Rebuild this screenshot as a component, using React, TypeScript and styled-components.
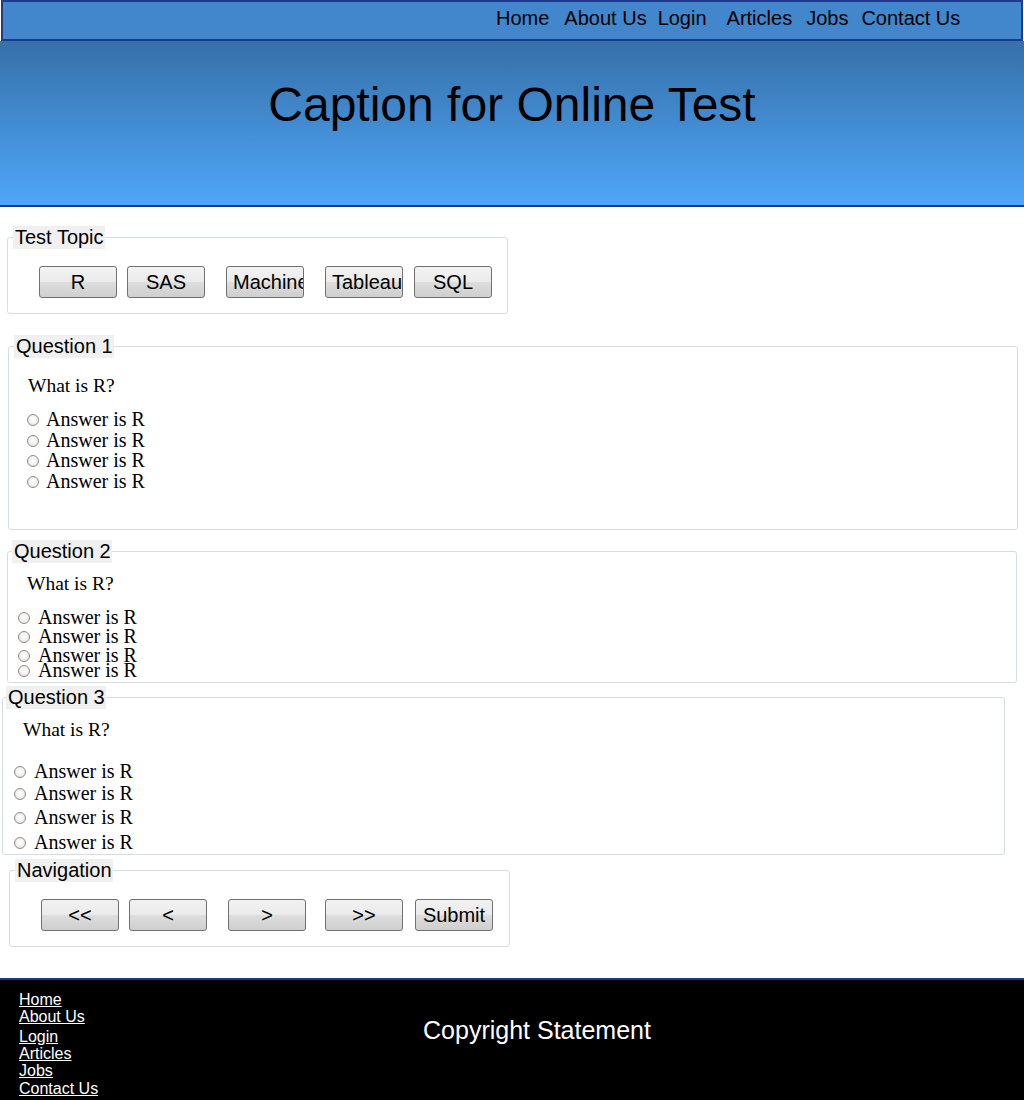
import React from "react";
import styled, { createGlobalStyle } from "styled-components";

const GlobalStyle = createGlobalStyle`
  html, body {
    margin: 0;
    padding: 0;
    background: #ffffff;
  }
  body {
    font-family: "Liberation Sans", Arial, sans-serif;
    color: #000;
  }
`;

const Page = styled.div`
  display: flex;
  flex-direction: column;
`;

const NavBar = styled.nav`
  box-sizing: border-box;
  margin: 0 1px;
  height: 41px;
  border: 2px solid #1d3a8f;
  background: #4287cc;
  display: flex;
  align-items: flex-start;
  padding: 5px 0 0 493px;
  font-size: 20px;
  line-height: 23px;
`;

const NavLink = styled.a<{ $ml: number }>`
  margin-left: ${(p) => p.$ml}px;
  color: #000;
  text-decoration: none;
  white-space: nowrap;
`;

const Banner = styled.header`
  box-sizing: border-box;
  height: 166px;
  padding-top: 36px;
  border-bottom: 2px solid #1d3a8f;
  background: linear-gradient(#3670a8, #4fa6f9);
`;

const Title = styled.h1`
  margin: 0;
  font-size: 48px;
  font-weight: normal;
  line-height: 55px;
  text-align: center;
  color: #000;
`;

const Main = styled.main`
  display: flex;
  flex-direction: column;
  align-items: flex-start;
`;

const Group = styled.fieldset<{ $top: number; $left: number; $width: number; $pb: number }>`
  box-sizing: border-box;
  margin: ${(p) => p.$top}px 0 0 ${(p) => p.$left}px;
  width: ${(p) => p.$width}px;
  min-width: 0;
  padding: 0 0 ${(p) => p.$pb}px 0;
  border: 1px solid #d3dde5;
  border-radius: 3px;
  background: #fff;
`;

const Legend = styled.legend<{ $ml: number }>`
  margin-left: ${(p) => p.$ml}px;
  padding: 0 1px 0 2px;
  background: #f0f0f0;
  font-family: "Liberation Sans", Arial, sans-serif;
  font-size: 20px;
  line-height: 23px;
  color: #000;
`;

const ButtonRow = styled.div<{ $pl: number }>`
  display: flex;
  padding: 17px 0 0 ${(p) => p.$pl}px;
`;

const Btn = styled.button<{ $ml: number }>`
  box-sizing: border-box;
  flex: none;
  display: flex;
  align-items: center;
  justify-content: safe center;
  width: 78px;
  height: 32px;
  margin: 0 0 0 ${(p) => p.$ml}px;
  padding: 0 6px;
  border: 1px solid #707070;
  border-radius: 3px;
  background: linear-gradient(#f2f2f2 0%, #ebebeb 48%, #dddddd 52%, #cfcfcf 100%);
  font-family: "Liberation Sans", Arial, sans-serif;
  font-size: 20px;
  line-height: 23px;
  color: #000;
  white-space: nowrap;
  overflow: hidden;
  cursor: pointer;
`;

const QuestionText = styled.p<{ $mt: number; $pl: number }>`
  margin: ${(p) => p.$mt}px 0 0 0;
  padding-left: ${(p) => p.$pl}px;
  font-family: "Liberation Serif", "Times New Roman", serif;
  font-size: 19.5px;
  line-height: 23px;
`;

const AnswerList = styled.div<{ $mt: number; $pl: number }>`
  display: flex;
  flex-direction: column;
  margin-top: ${(p) => p.$mt}px;
  padding-left: ${(p) => p.$pl}px;
`;

const AnswerRow = styled.label<{ $h: number }>`
  display: flex;
  align-items: flex-start;
  height: ${(p) => p.$h}px;
  font-family: "Liberation Serif", "Times New Roman", serif;
  font-size: 20px;
  line-height: 23px;
  white-space: nowrap;
`;

const Radio = styled.input`
  appearance: none;
  -webkit-appearance: none;
  box-sizing: border-box;
  flex: none;
  width: 12px;
  height: 12px;
  margin: 6px 0 0 0;
  border: 1px solid #948c84;
  border-radius: 50%;
  background: radial-gradient(circle at 50% 45%, #ffffff 0%, #f2f2f2 50%, #d6d6d6 100%);
  &:checked {
    background: radial-gradient(circle, #2a6fc4 0 35%, #ffffff 40%, #e8e8e8 100%);
  }
`;

const AnswerLabel = styled.span<{ $gap: number }>`
  margin-left: ${(p) => p.$gap}px;
`;

const Footer = styled.footer`
  margin-top: 31px;
  min-height: 140px;
  border-top: 2px solid #1d3a8f;
  background: #000;
  display: flex;
  align-items: flex-start;
`;

const FooterLinks = styled.div`
  flex: none;
  width: 31px;
  padding: 11px 0 0 19px;
  display: flex;
  flex-direction: column;
`;

const FooterLink = styled.a<{ $h: number }>`
  display: block;
  height: ${(p) => p.$h}px;
  font-size: 16px;
  line-height: 17.6px;
  color: #fff;
  text-decoration: underline;
  white-space: nowrap;
`;

const Copyright = styled.div`
  flex: 1;
  margin-top: 36px;
  text-align: center;
  font-size: 25px;
  line-height: 29px;
  color: #fff;
`;

const navItems = [
  { label: "Home", ml: 0 },
  { label: "About Us", ml: 15 },
  { label: "Login", ml: 11 },
  { label: "Articles", ml: 20 },
  { label: "Jobs", ml: 14 },
  { label: "Contact Us", ml: 13 },
];

const topics = [
  { label: "R", ml: 0 },
  { label: "SAS", ml: 10 },
  { label: "Machine", ml: 21 },
  { label: "Tableau", ml: 21 },
  { label: "SQL", ml: 11 },
];

const navButtons = [
  { label: "<<", ml: 0 },
  { label: "<", ml: 10 },
  { label: ">", ml: 21 },
  { label: ">>", ml: 19 },
  { label: "Submit", ml: 12 },
];

const questions = [
  { id: 1, top: 21, left: 8, width: 1010, legendMl: 5, qMt: 16, qPl: 19, aMt: 11, aPl: 18, gap: 7, rows: [21, 20, 21, 23], pb: 36 },
  { id: 2, top: 10, left: 7, width: 1010, legendMl: 4, qMt: 9, qPl: 19, aMt: 11, aPl: 10, gap: 8, rows: [19, 19, 15, 23], pb: 0 },
  { id: 3, top: 3, left: 2, width: 1003, legendMl: 3, qMt: 9, qPl: 20, aMt: 19, aPl: 11, gap: 8, rows: [22, 24, 25, 23], pb: 0 },
];

const footerLinks = [
  { label: "Home", h: 17 },
  { label: "About Us", h: 19.5 },
  { label: "Login", h: 17 },
  { label: "Articles", h: 17 },
  { label: "Jobs", h: 18 },
  { label: "Contact Us", h: 18 },
];

export default function App() {
  return (
    <Page>
      <GlobalStyle />
      <NavBar>
        {navItems.map((n) => (
          <NavLink key={n.label} href="#" $ml={n.ml}>
            {n.label}
          </NavLink>
        ))}
      </NavBar>
      <Banner>
        <Title>Caption for Online Test</Title>
      </Banner>
      <Main>
        <Group $top={19} $left={7} $width={501} $pb={15}>
          <Legend $ml={5}>Test Topic</Legend>
          <ButtonRow $pl={31}>
            {topics.map((t) => (
              <Btn key={t.label} type="button" $ml={t.ml}>
                {t.label}
              </Btn>
            ))}
          </ButtonRow>
        </Group>

        {questions.map((q) => (
          <Group key={q.id} $top={q.top} $left={q.left} $width={q.width} $pb={q.pb}>
            <Legend $ml={q.legendMl}>Question {q.id}</Legend>
            <QuestionText $mt={q.qMt} $pl={q.qPl}>
              What is R?
            </QuestionText>
            <AnswerList $mt={q.aMt} $pl={q.aPl}>
              {q.rows.map((h, i) => (
                <AnswerRow key={i} $h={h}>
                  <Radio type="radio" name={`q${q.id}`} />
                  <AnswerLabel $gap={q.gap}>Answer is R</AnswerLabel>
                </AnswerRow>
              ))}
            </AnswerList>
          </Group>
        ))}

        <Group $top={4} $left={9} $width={501} $pb={15}>
          <Legend $ml={5}>Navigation</Legend>
          <ButtonRow $pl={31}>
            {navButtons.map((b) => (
              <Btn key={b.label} type="button" $ml={b.ml}>
                {b.label}
              </Btn>
            ))}
          </ButtonRow>
        </Group>
      </Main>
      <Footer>
        <FooterLinks>
          {footerLinks.map((l) => (
            <FooterLink key={l.label} href="#" $h={l.h}>
              {l.label}
            </FooterLink>
          ))}
        </FooterLinks>
        <Copyright>Copyright Statement</Copyright>
      </Footer>
    </Page>
  );
}
